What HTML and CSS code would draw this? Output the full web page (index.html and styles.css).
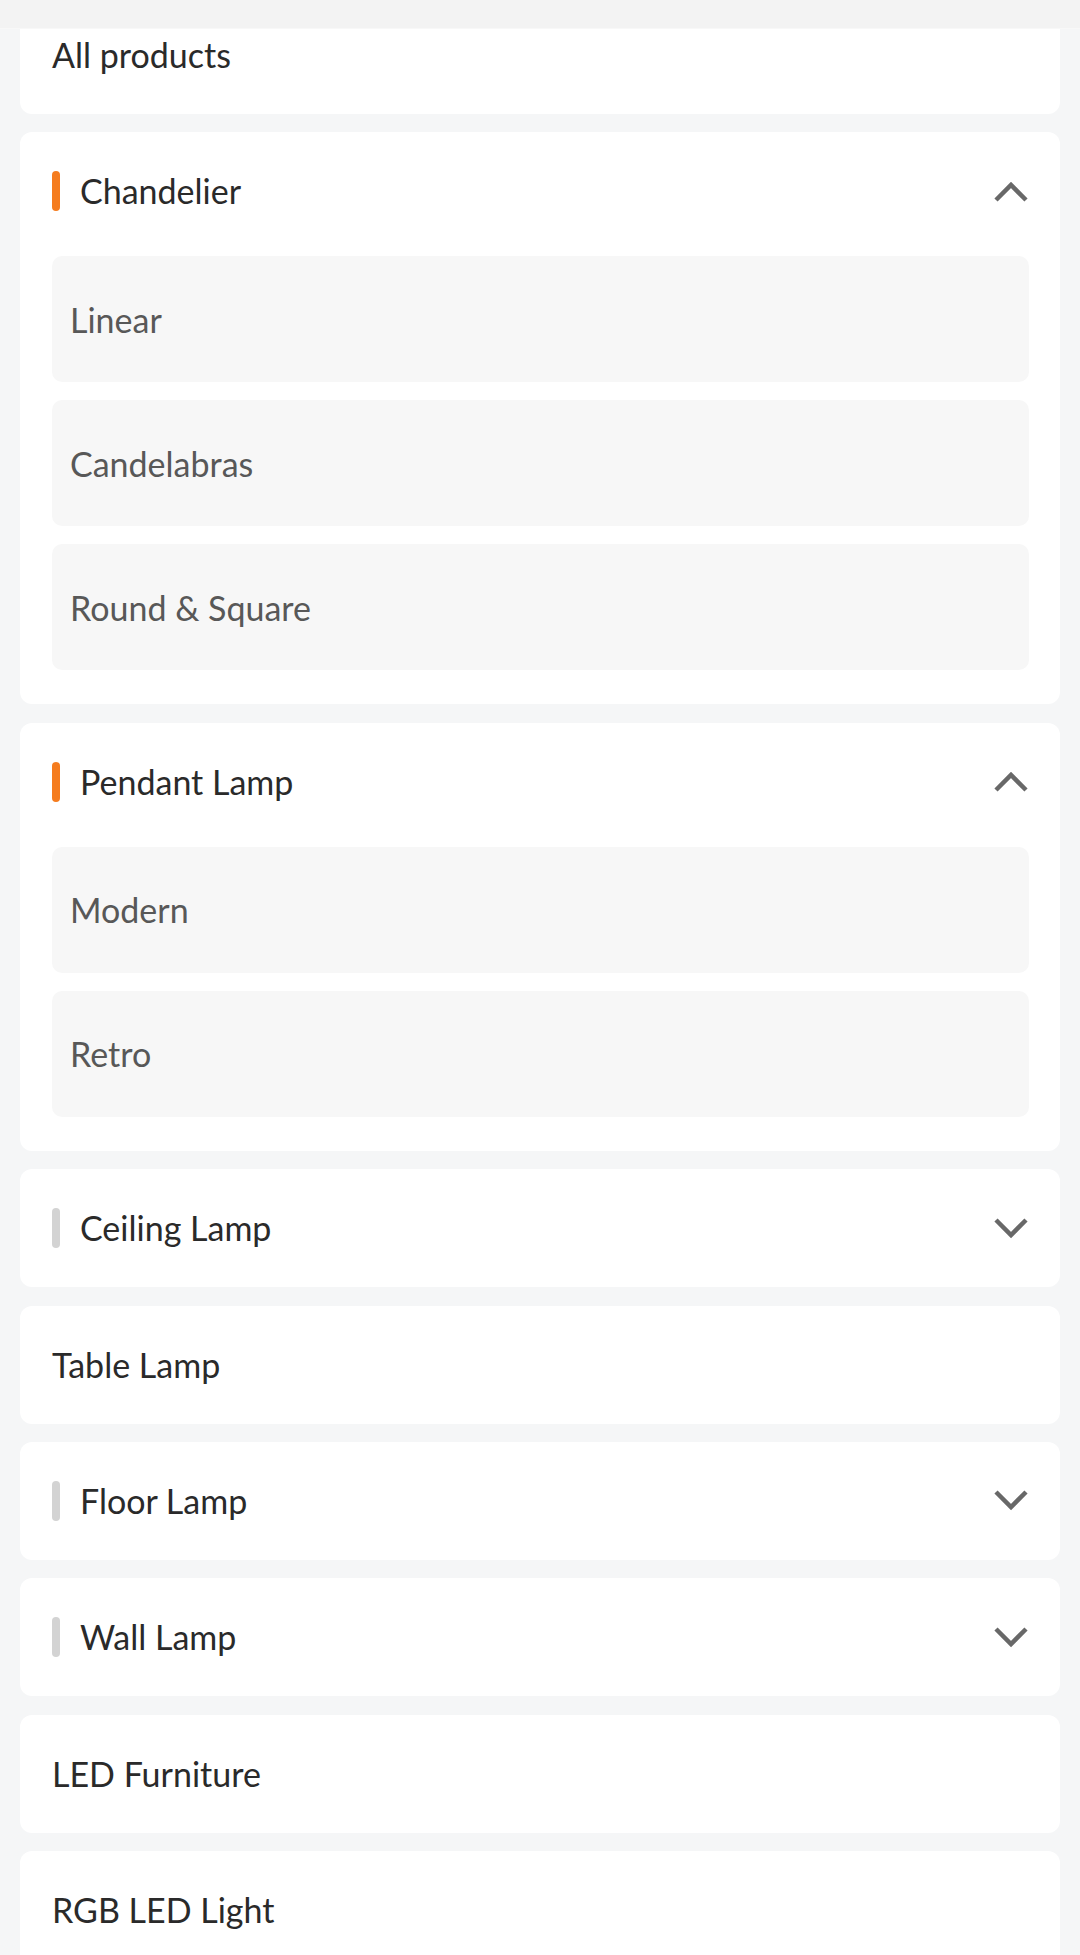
FILE: index.html
```html
<!DOCTYPE html>
<html lang="en">
<head>
<meta charset="utf-8">
<title>Categories</title>
<link rel="stylesheet" href="styles.css">
</head>
<body>
<div class="topbar"></div>
<main class="list">
  <div class="card">
    <div class="row"><span class="label">All products</span></div>
  </div>

  <div class="card">
    <div class="row">
      <span class="bar bar-active"></span><span class="label">Chandelier</span>
      <svg class="chev" viewBox="0 0 36 23"><polyline points="3,20 18,5 33,20"/></svg>
    </div>
    <div class="subs">
      <div class="sub">Linear</div>
      <div class="sub">Candelabras</div>
      <div class="sub">Round &amp; Square</div>
    </div>
  </div>

  <div class="card">
    <div class="row">
      <span class="bar bar-active"></span><span class="label">Pendant Lamp</span>
      <svg class="chev" viewBox="0 0 36 23"><polyline points="3,20 18,5 33,20"/></svg>
    </div>
    <div class="subs">
      <div class="sub">Modern</div>
      <div class="sub">Retro</div>
    </div>
  </div>

  <div class="card">
    <div class="row">
      <span class="bar"></span><span class="label">Ceiling Lamp</span>
      <svg class="chev" viewBox="0 0 36 23"><polyline points="3,3 18,18 33,3"/></svg>
    </div>
  </div>

  <div class="card">
    <div class="row"><span class="label">Table Lamp</span></div>
  </div>

  <div class="card">
    <div class="row">
      <span class="bar"></span><span class="label">Floor Lamp</span>
      <svg class="chev" viewBox="0 0 36 23"><polyline points="3,3 18,18 33,3"/></svg>
    </div>
  </div>

  <div class="card">
    <div class="row">
      <span class="bar"></span><span class="label">Wall Lamp</span>
      <svg class="chev" viewBox="0 0 36 23"><polyline points="3,3 18,18 33,3"/></svg>
    </div>
  </div>

  <div class="card">
    <div class="row"><span class="label">LED Furniture</span></div>
  </div>

  <div class="card">
    <div class="row"><span class="label">RGB LED Light</span></div>
  </div>
</main>
</body>
</html>
```
FILE: styles.css
```css
html, body {
  margin: 0;
  padding: 0;
}

body {
  background: #f5f6f7;
  font-family: Lato, "Open Sans", "Noto Sans", sans-serif;
  color: #2a2a2a;
}

.topbar {
  position: fixed;
  top: 0;
  left: 0;
  right: 0;
  height: 28px;
  background: #f3f3f3;
  border-bottom: 1px solid #f8f8f8;
  z-index: 5;
}

.list {
  display: flex;
  flex-direction: column;
  gap: 18.4px;
  padding: 0 20px 40px;
  margin-top: -4px;
}

.card {
  background: #ffffff;
  border-radius: 12px;
  padding: 0 31px 0 32px;
}

.row {
  height: 118px;
  display: flex;
  align-items: center;
}

.label {
  font-size: 34px;
  line-height: 1;
  color: #2a2a2a;
}

.bar {
  width: 8px;
  height: 40px;
  border-radius: 4px;
  background: #d3d3d3;
  margin-right: 20px;
  flex: none;
}

.bar-active {
  background: #f57c1e;
}

.chev {
  margin-left: auto;
  width: 36px;
  height: 23px;
  flex: none;
}

.chev polyline {
  fill: none;
  stroke: #686868;
  stroke-width: 4.5;
  stroke-linecap: butt;
  stroke-linejoin: miter;
}

.subs {
  display: flex;
  flex-direction: column;
  gap: 18px;
  padding: 6px 0 34px;
}

.sub {
  height: 126px;
  background: #f7f7f7;
  border-radius: 10px;
  padding: 0 18px;
  display: flex;
  align-items: center;
  font-size: 34px;
  color: #585858;
}
```
